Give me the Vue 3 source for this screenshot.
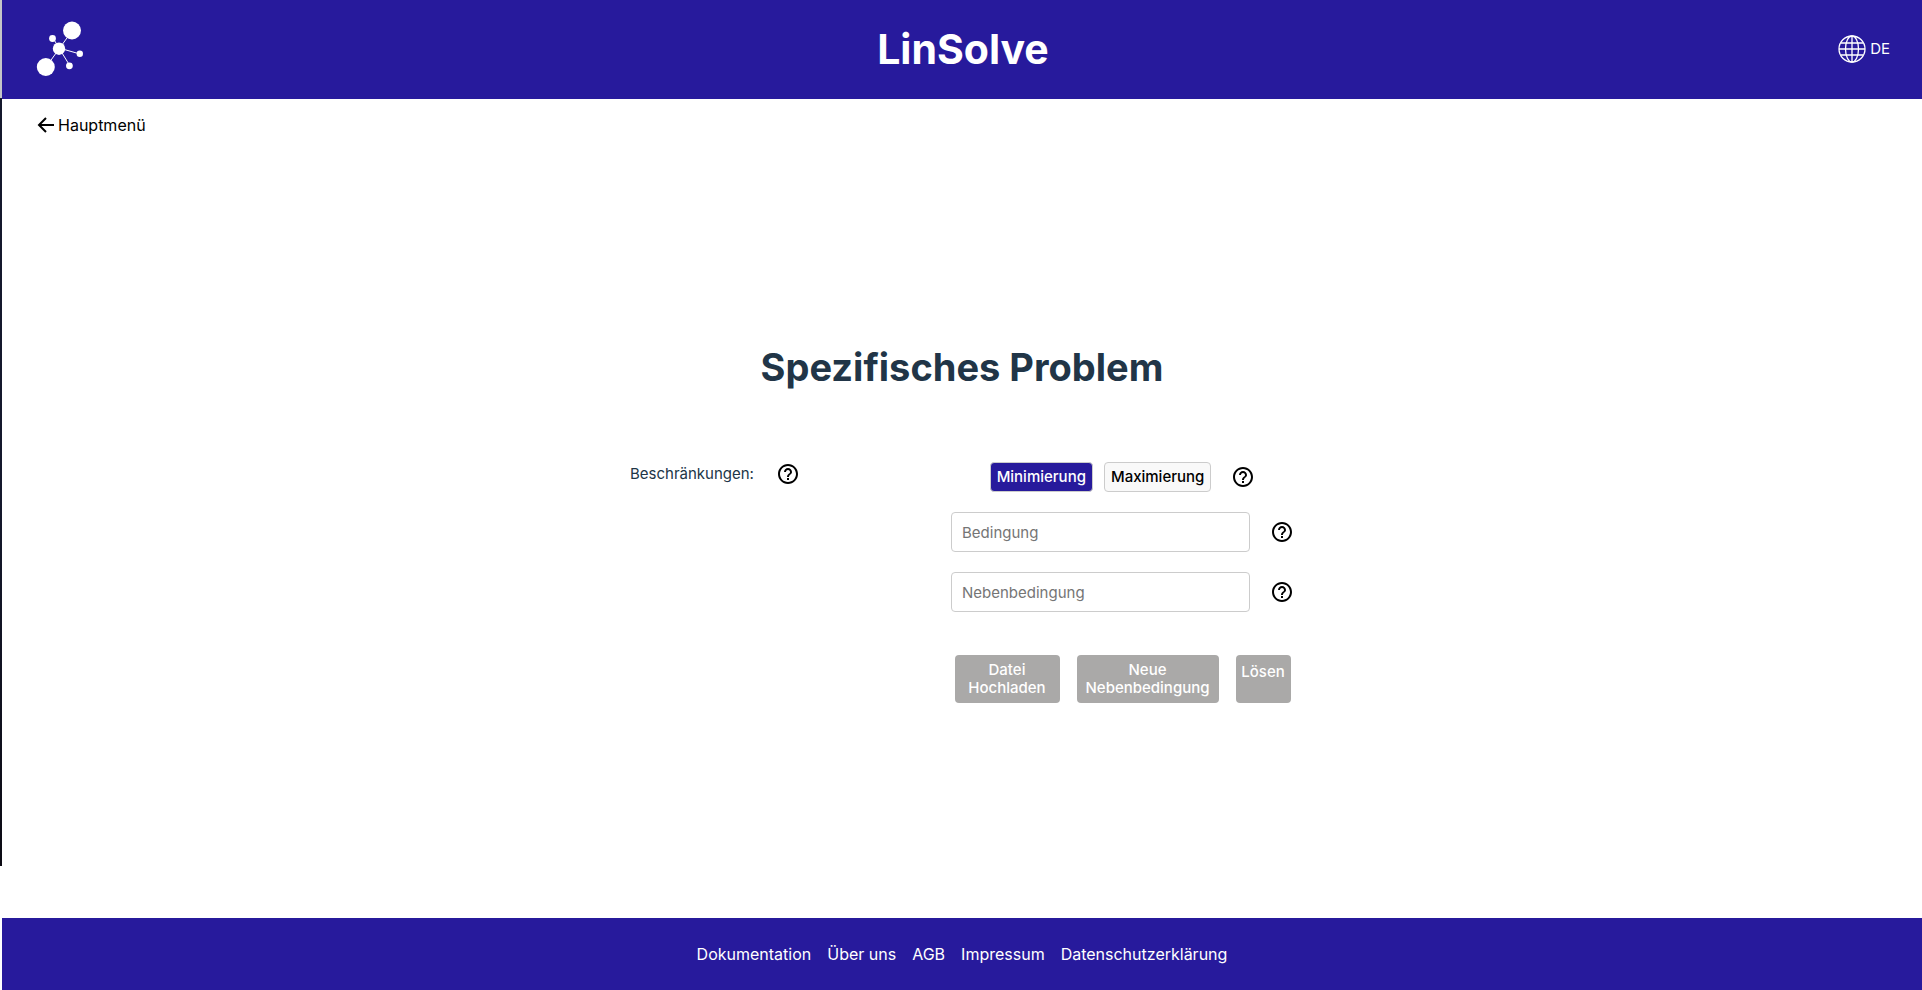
<script setup>
import { ref } from 'vue'

const mode = ref('min')
const condition = ref('')
const constraint = ref('')
const links = ['Dokumentation', 'Über uns', 'AGB', 'Impressum', 'Datenschutzerklärung']
const helpPath =
  'M11 18h2v-2h-2v2zm1-16C6.48 2 2 6.48 2 12s4.48 10 10 10 10-4.48 10-10S17.52 2 12 2zm0 18c-4.41 0-8-3.59-8-8s3.59-8 8-8 8 3.59 8 8-3.59 8-8 8zm0-14c-2.21 0-4 1.79-4 4h2c0-1.1.9-2 2-2s2 .9 2 2c0 2-3 1.75-3 5h2c0-2.25 3-2.5 3-5 0-2.21-1.79-4-4-4z'
</script>

<template>
  <div class="page">
    <header class="header">
      <a class="logo" href="#" aria-label="LinSolve">
        <svg width="48" height="56" viewBox="0 0 48 56" fill="#fff" stroke="#fff">
          <path d="M36 10L10 46M17 17l6 10M23 27l21 6M23 27l11 18" fill="none" stroke-width="1" />
          <g stroke="none">
            <circle cx="36" cy="9.500" r="9" />
            <circle cx="16.500" cy="17.500" r="3.400" />
            <circle cx="23" cy="27.700" r="6.200" />
            <circle cx="9.800" cy="46" r="9" />
            <circle cx="43.800" cy="32.700" r="3.200" />
            <circle cx="33.400" cy="44.800" r="3.400" />
          </g>
        </svg>
      </a>
      <h1 class="brand">LinSolve</h1>
      <button class="lang" type="button">
        <svg width="28" height="28" viewBox="0 0 28 28" fill="none" stroke="#fff" stroke-width="1.300">
          <circle cx="14" cy="14" r="13" />
          <ellipse cx="14" cy="14" rx="6.500" ry="13" />
          <path d="M14 1v26M1 14h26M3 8q11 0 22 0M3 20q11 0 22 0" />
        </svg>
        <span>DE</span>
      </button>
    </header>

    <nav class="back">
      <a href="#">
        <svg width="20" height="20" viewBox="0 0 20 20" fill="none" stroke="#000" stroke-width="2">
          <path d="M18 10H3M10 3l-7 7 7 7" />
        </svg>
        <span>Hauptmenü</span>
      </a>
    </nav>

    <main class="main">
      <h2 class="title">Spezifisches Problem</h2>
      <form class="form" @submit.prevent>
        <div class="row">
          <span class="caption">Beschränkungen:</span>
          <button class="help" type="button" aria-label="Hilfe">
            <svg width="24" height="24" viewBox="0 0 24 24"><path :d="helpPath" /></svg>
          </button>
        </div>
        <div class="fields">
          <div class="row">
            <div class="modes">
              <button type="button" class="mode" :class="{ active: mode === 'min' }" @click="mode = 'min'">Minimierung</button>
              <button type="button" class="mode" :class="{ active: mode === 'max' }" @click="mode = 'max'">Maximierung</button>
            </div>
            <button class="help" type="button" aria-label="Hilfe">
              <svg width="24" height="24" viewBox="0 0 24 24"><path :d="helpPath" /></svg>
            </button>
          </div>
          <div class="row">
            <input v-model="condition" type="text" placeholder="Bedingung" aria-label="Bedingung" />
            <button class="help" type="button" aria-label="Hilfe">
              <svg width="24" height="24" viewBox="0 0 24 24"><path :d="helpPath" /></svg>
            </button>
          </div>
          <div class="row">
            <input v-model="constraint" type="text" placeholder="Nebenbedingung" aria-label="Nebenbedingung" />
            <button class="help" type="button" aria-label="Hilfe">
              <svg width="24" height="24" viewBox="0 0 24 24"><path :d="helpPath" /></svg>
            </button>
          </div>
          <div class="actions">
            <button type="button" class="action upload">Datei<br />Hochladen</button>
            <button type="button" class="action add">Neue<br />Nebenbedingung</button>
            <button type="submit" class="action solve">Lösen</button>
          </div>
        </div>
      </form>
    </main>

    <footer class="footer">
      <a v-for="l in links" :key="l" href="#">{{ l }}</a>
    </footer>
  </div>
</template>

<style>
body {
  background: #fff;
}
</style>

<style scoped>
.page {
  box-sizing: border-box;
  min-height: 100vh;
  padding-left: 2px;
  display: flex;
  flex-direction: column;
  font-family: Inter, "Liberation Sans", sans-serif;
  font-size: 16px;
  line-height: 24px;
  color: #213547;
  background: linear-gradient(#c4c6c8 0 98px, #14182c 98px 500px, #0c0b14 866px, #fff 866px) left top / 2px 100% no-repeat;
}
button,
input {
  font: inherit;
  box-sizing: border-box;
}
a {
  color: inherit;
  text-decoration: none;
}
svg {
  display: block;
}
.header {
  display: grid;
  grid-template-columns: 1fr auto 1fr;
  align-items: center;
  height: 99px;
  box-sizing: border-box;
  padding: 0 32px 2px 34px;
  background: #271a9c;
  color: #fff;
}
.logo {
  justify-self: start;
}
.brand {
  margin: 0;
  font-size: 41px;
  line-height: 48px;
  font-weight: 700;
}
.lang {
  justify-self: end;
  display: flex;
  align-items: center;
  gap: 4px;
  padding: 0;
  border: 0;
  background: none;
  color: #fff;
  font-size: 15px;
}
.back {
  display: flex;
  padding: 14px 34px;
  color: #000;
}
.back a {
  display: flex;
  align-items: center;
  gap: 2px;
}
.main {
  flex: 1;
  display: flex;
  flex-direction: column;
  align-items: center;
}
.title {
  margin: 192px 0 0;
  font-size: 38px;
  line-height: 48px;
  font-weight: 700;
}
.form {
  display: flex;
  align-items: flex-start;
  justify-content: space-between;
  width: 664px;
  max-width: 100%;
  margin-top: 71px;
  font-size: 15px;
}
.row {
  display: flex;
  align-items: center;
  gap: 20px;
}
.caption {
  min-width: 126px;
}
.help {
  padding: 0;
  border: 0;
  background: none;
}
.fields {
  display: flex;
  flex-direction: column;
  align-items: center;
  gap: 20px;
}
.modes {
  display: flex;
  gap: 11px;
}
.mode {
  height: 30px;
  padding: 0 6px;
  border: 1px solid #ccc;
  border-radius: 4px;
  background: #f9f9f9;
  color: #000;
  font-weight: 500;
  line-height: 28px;
}
.mode.active {
  background: #271a9c;
  color: #fff;
}
input {
  width: 299px;
  height: 40px;
  padding: 0 10px;
  border: 1px solid #ccc;
  border-radius: 4px;
  background: #fff;
}
input::placeholder {
  color: #757575;
  opacity: 1;
}
.actions {
  display: flex;
  gap: 17px;
  margin-top: 23px;
}
.action {
  display: flex;
  justify-content: center;
  align-items: flex-start;
  padding: 6px 0;
  border: 0;
  border-radius: 4px;
  background: #aaa9a8;
  color: #fff;
  font-weight: 500;
  line-height: 18px;
}
.upload {
  width: 105px;
}
.add {
  width: 142px;
}
.solve {
  width: 55px;
  padding-top: 8px;
}
.footer {
  display: flex;
  justify-content: center;
  align-items: center;
  flex-wrap: wrap;
  gap: 16px;
  min-height: 72px;
  background: #271a9c;
  color: #fff;
}
</style>
